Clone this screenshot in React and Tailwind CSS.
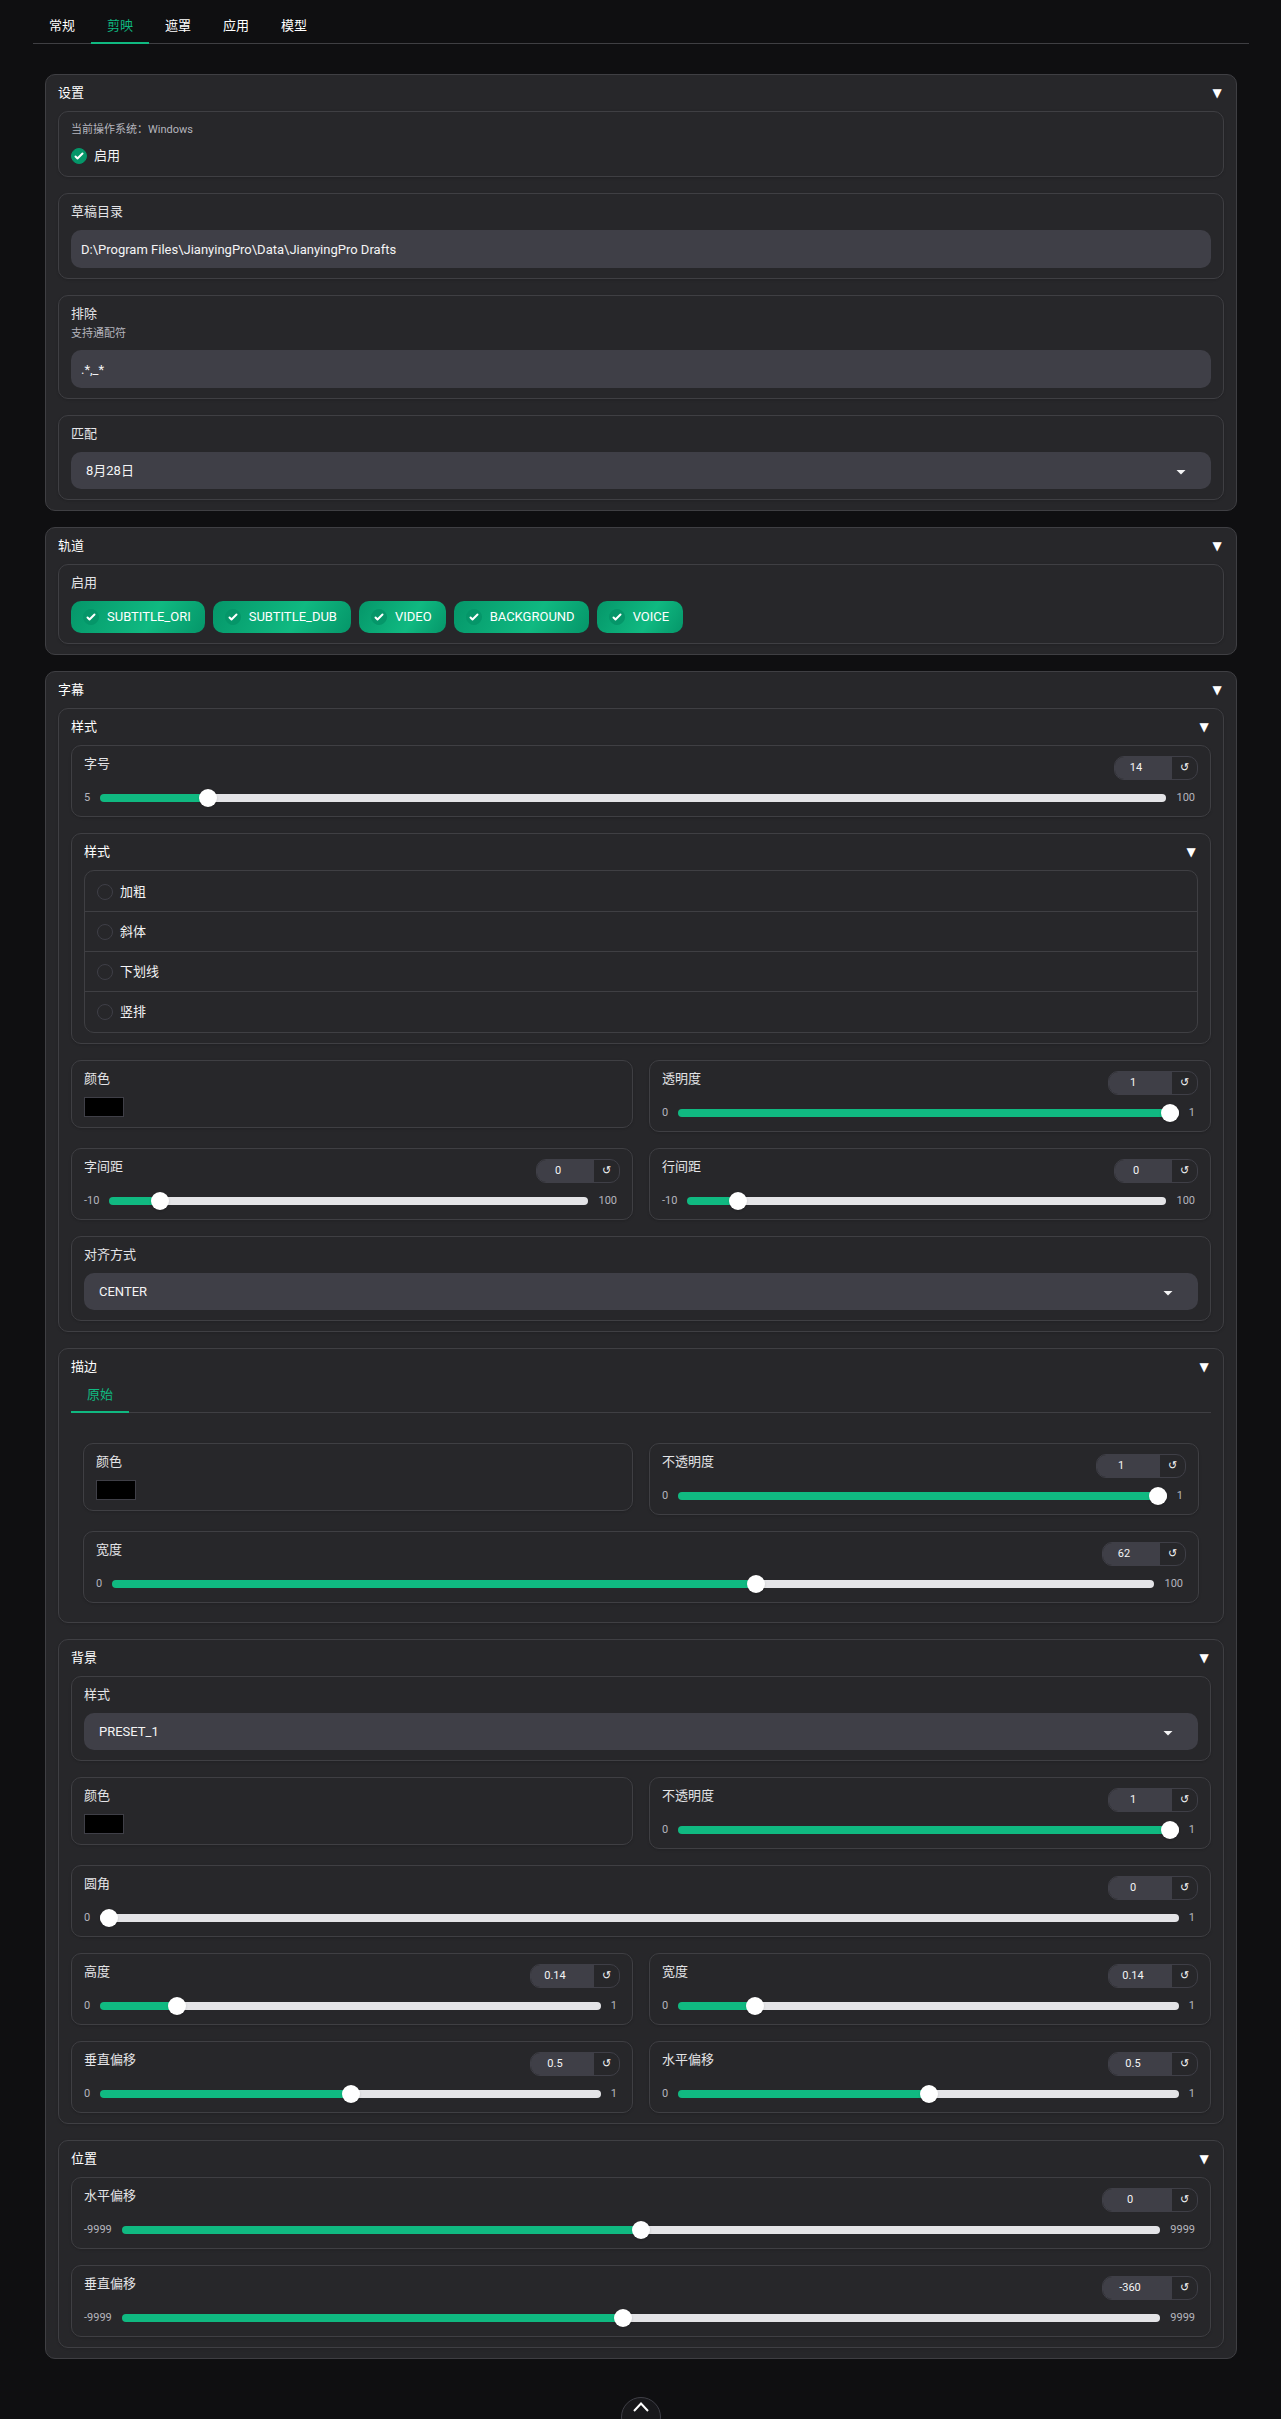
import React, { useId, useState } from "react";
import clsx from "clsx";

const Section = ({ title, nested, children }) => {
  const [open, setOpen] = useState(true);

  return (
    <section
      className={clsx(
        "rounded-[10px] border border-[#3f3f43] bg-zinc-800 px-3 py-2.5",
        nested && "shadow-sm"
      )}
    >
      <button
        type="button"
        aria-expanded={open}
        onClick={() => setOpen(!open)}
        className="flex w-full items-center justify-between text-[13px] leading-4 text-white"
      >
        <span>{title}</span>
        <span className={clsx("w-3.5 text-center font-[DejaVu_Sans] text-[12px]", !open && "rotate-90")}>
          ▼
        </span>
      </button>
      {open && <div className="mt-2.5 flex flex-col gap-4">{children}</div>}
    </section>
  );
};

const Box = ({ children, className }) => (
  <div
    className={clsx(
      "rounded-[10px] border border-[#3f3f43] bg-zinc-800 px-3 py-2.5 shadow-sm",
      className
    )}
  >
    {children}
  </div>
);

const Row = ({ children }) => (
  <div className="grid grid-cols-2 items-start gap-4">{children}</div>
);

const CheckMark = () => (
  <svg
    viewBox="0 0 16 16"
    fill="currentColor"
    className="pointer-events-none col-start-1 row-start-1 size-4 text-white opacity-0 peer-checked:opacity-100"
  >
    <path d="M12.207 4.793a1 1 0 010 1.414l-5 5a1 1 0 01-1.414 0l-2-2a1 1 0 011.414-1.414L6.5 9.086l4.293-4.293a1 1 0 011.414 0z" />
  </svg>
);

const CheckInput = ({ defaultChecked }) => (
  <span className="grid">
    <input
      type="checkbox"
      defaultChecked={defaultChecked}
      className="peer col-start-1 row-start-1 size-4 appearance-none rounded-full border border-zinc-700 bg-zinc-800 checked:border-[#059669] checked:bg-[#059669]"
    />
    <CheckMark />
  </span>
);

const Checkbox = ({ label, defaultChecked, className }) => (
  <label
    className={clsx(
      "flex items-center gap-[7px] text-[13px] leading-5 text-zinc-100",
      className
    )}
  >
    <CheckInput defaultChecked={defaultChecked} />
    <span>{label}</span>
  </label>
);

const Pill = ({ label }) => (
  <label className="flex h-8 items-center gap-2 rounded-[10px] bg-linear-[120deg,#059669,#10b981_60%,#059669] pr-3.5 pl-3 text-[13px] leading-5 text-white">
    <CheckInput defaultChecked />
    <span>{label}</span>
  </label>
);

const TextField = ({ label, info, value }) => {
  const id = useId();
  return (
    <Box>
      <label htmlFor={id} className="block text-[13px] leading-4 text-zinc-200">
        {label}
      </label>
      {info && <p className="mt-1 -mb-0.5 text-[11px] leading-4 text-[#b5b5bd]">{info}</p>}
      <input
        id={id}
        type="text"
        defaultValue={value}
        className="mt-2.5 block h-[38px] w-full rounded-[10px] bg-zinc-700 px-2.5 text-[13px] text-zinc-100 outline-none"
      />
    </Box>
  );
};

const SelectField = ({ label, value }) => {
  const id = useId();
  return (
    <Box>
      <label htmlFor={id} className="block text-[13px] leading-4 text-zinc-200">
        {label}
      </label>
      <div className="mt-2.5 grid items-center">
        <select
          id={id}
          defaultValue={value}
          className="col-start-1 row-start-1 h-[37px] w-full appearance-none rounded-[10px] bg-zinc-700 px-[15px] text-[13px] text-zinc-100 outline-none"
        >
          <option value={value}>{value}</option>
        </select>
        <svg
          viewBox="0 0 18 18"
          fill="currentColor"
          className="pointer-events-none col-start-1 row-start-1 mr-[21px] size-[18px] justify-self-end text-zinc-100"
        >
          <path d="M4.5 8l4.5 4.5 4.5-4.5z" />
        </svg>
      </div>
    </Box>
  );
};

const ColorField = ({ label }) => {
  const id = useId();
  return (
    <Box>
      <label htmlFor={id} className="block text-[13px] leading-4 text-zinc-200">
        {label}
      </label>
      <input
        id={id}
        type="color"
        defaultValue="#000000"
        className="mt-2.5 block h-5 w-10 appearance-none border border-zinc-700 bg-black p-0 [&::-webkit-color-swatch]:border-0 [&::-webkit-color-swatch-wrapper]:p-0"
      />
    </Box>
  );
};

const SliderField = ({ label, min, max, step = 1, initial, numberWidth = "w-[57px]" }) => {
  const id = useId();
  const [value, setValue] = useState(initial);
  const ratio = (value - min) / (max - min);
  // the thumb is 18px wide, so its centre never reaches the ends of the track
  const stop = `calc(${ratio * 100}% + ${ratio === 0 ? 0 : 9 - ratio * 18}px)`;
  const onChange = (e) => setValue(Number(e.target.value));

  return (
    <Box>
      <div className="flex items-start justify-between">
        <label htmlFor={id} className="text-[13px] leading-4 text-zinc-200">
          {label}
        </label>
        <div className="flex h-6 overflow-hidden rounded-[10px] border border-zinc-700 text-[11px] text-zinc-100">
          <input
            type="number"
            aria-label={label}
            min={min}
            max={max}
            step={step}
            value={value}
            onChange={onChange}
            className={clsx(
              "[appearance:textfield] bg-zinc-700 pr-[15px] text-center outline-none [&::-webkit-inner-spin-button]:appearance-none",
              numberWidth
            )}
          />
          <button
            type="button"
            aria-label="重置"
            onClick={() => setValue(initial)}
            className="w-[25px] text-center font-[DejaVu_Sans] leading-[22px]"
          >
            ↺
          </button>
        </div>
      </div>
      <div className="mt-2.5 flex items-center gap-2.5 pr-[3px] text-[11px] leading-4 text-[#b5b5bd]">
        <span>{min}</span>
        <input
          id={id}
          type="range"
          min={min}
          max={max}
          step={step}
          value={value}
          onChange={onChange}
          style={{
            backgroundImage: `linear-gradient(to right, #10b981 ${stop}, #e4e4e7 ${stop})`,
          }}
          className="h-2 min-w-0 flex-1 appearance-none rounded-[4px] outline-none [&::-webkit-slider-thumb]:size-[18px] [&::-webkit-slider-thumb]:appearance-none [&::-webkit-slider-thumb]:rounded-full [&::-webkit-slider-thumb]:bg-white [&::-webkit-slider-thumb]:shadow"
        />
        <span>{max}</span>
      </div>
    </Box>
  );
};

const Tabs = ({ items, active, className }) => (
  <div role="tablist" className={clsx("flex border-b border-[#3f3f43]", className)}>
    {items.map((item) => (
      <button
        key={item}
        type="button"
        role="tab"
        aria-selected={item === active}
        className={clsx(
          "-mb-px border-b-2 px-4 pb-1.5 text-[13px] leading-5",
          item === active
            ? "border-[#10b981] text-[#10b981]"
            : "border-transparent text-white"
        )}
      >
        {item}
      </button>
    ))}
  </div>
);

const tracks = ["SUBTITLE_ORI", "SUBTITLE_DUB", "VIDEO", "BACKGROUND", "VOICE"];
const fontStyles = ["加粗", "斜体", "下划线", "竖排"];

const App = () => {
  return (
    <div className="relative min-h-screen overflow-hidden bg-[#0f0f11] pr-8 pl-[33px] font-['Roboto','Noto_Sans_CJK_SC',sans-serif]">
      <Tabs
        items={["常规", "剪映", "遮罩", "应用", "模型"]}
        active="剪映"
        className="pt-4"
      />

      <main className="flex flex-col gap-4 px-3 pt-[30px] pb-[61px]">
        <Section title="设置">
          <Box>
            <p className="mb-2 text-[11px] leading-4 text-[#b5b5bd]">当前操作系统：Windows</p>
            <Checkbox label="启用" defaultChecked />
          </Box>
          <TextField
            label="草稿目录"
            value={"D:\\Program Files\\JianyingPro\\Data\\JianyingPro Drafts"}
          />
          <TextField label="排除" info="支持通配符" value=".*,_*" />
          <SelectField label="匹配" value="8月28日" />
        </Section>

        <Section title="轨道">
          <Box>
            <fieldset>
              <legend className="text-[13px] leading-4 text-zinc-200">启用</legend>
              <div className="mt-2.5 flex flex-wrap gap-2">
                {tracks.map((track) => (
                  <Pill key={track} label={track} />
                ))}
              </div>
            </fieldset>
          </Box>
        </Section>

        <Section title="字幕">
          <Section title="样式" nested>
            <SliderField label="字号" min={5} max={100} initial={14} />
            <Section title="样式" nested>
              <div className="divide-y divide-[#3f3f43] rounded-[10px] border border-[#3f3f43] py-px">
                {fontStyles.map((style) => (
                  <Checkbox key={style} label={style} className="box-content h-[39px] px-3" />
                ))}
              </div>
            </Section>
            <Row>
              <ColorField label="颜色" />
              <SliderField label="透明度" min={0} max={1} step={0.01} initial={1} numberWidth="w-[63px]" />
            </Row>
            <Row>
              <SliderField label="字间距" min={-10} max={100} initial={0} />
              <SliderField label="行间距" min={-10} max={100} initial={0} />
            </Row>
            <SelectField label="对齐方式" value="CENTER" />
          </Section>

          <Section title="描边" nested>
            <div>
              <Tabs items={["原始"]} active="原始" />
              <div className="flex flex-col gap-4 px-3 pt-[30px] pb-[9px]">
                <Row>
                  <ColorField label="颜色" />
                  <SliderField label="不透明度" min={0} max={1} step={0.01} initial={1} numberWidth="w-[63px]" />
                </Row>
                <SliderField label="宽度" min={0} max={100} initial={62} />
              </div>
            </div>
          </Section>

          <Section title="背景" nested>
            <SelectField label="样式" value="PRESET_1" />
            <Row>
              <ColorField label="颜色" />
              <SliderField label="不透明度" min={0} max={1} step={0.01} initial={1} numberWidth="w-[63px]" />
            </Row>
            <SliderField label="圆角" min={0} max={1} step={0.01} initial={0} numberWidth="w-[63px]" />
            <Row>
              <SliderField label="高度" min={0} max={1} step={0.01} initial={0.14} numberWidth="w-[63px]" />
              <SliderField label="宽度" min={0} max={1} step={0.01} initial={0.14} numberWidth="w-[63px]" />
            </Row>
            <Row>
              <SliderField label="垂直偏移" min={0} max={1} step={0.01} initial={0.5} numberWidth="w-[63px]" />
              <SliderField label="水平偏移" min={0} max={1} step={0.01} initial={0.5} numberWidth="w-[63px]" />
            </Row>
          </Section>

          <Section title="位置" nested>
            <SliderField label="水平偏移" min={-9999} max={9999} initial={0} numberWidth="w-[69px]" />
            <SliderField label="垂直偏移" min={-9999} max={9999} initial={-360} numberWidth="w-[69px]" />
          </Section>
        </Section>
      </main>

      <button
        type="button"
        aria-label="回到顶部"
        className="absolute -bottom-[17px] left-1/2 flex size-10 -translate-x-1/2 justify-center rounded-full border border-zinc-700 bg-zinc-900 pt-1 text-white"
      >
        <svg viewBox="0 0 16 16" fill="none" stroke="currentColor" strokeWidth="2" className="size-4">
          <path d="M1 9l7-7.5L15 9" />
        </svg>
      </button>
    </div>
  );
};

export default App;
